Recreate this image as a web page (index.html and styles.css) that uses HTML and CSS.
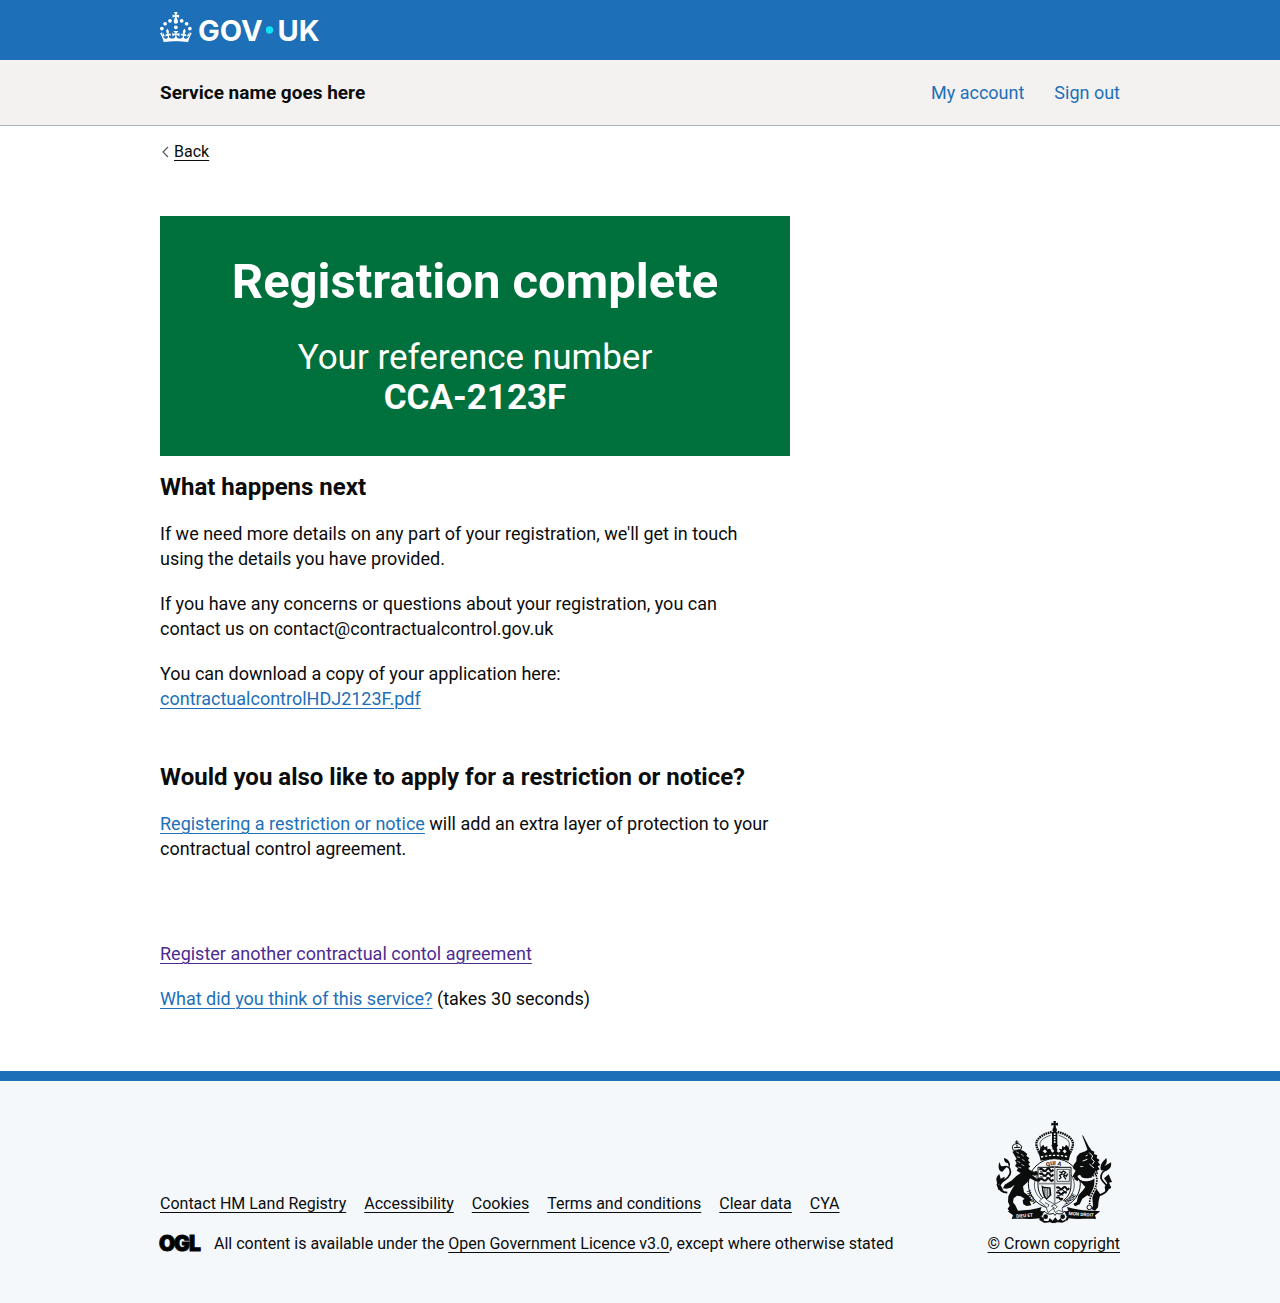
FILE: index.html
```html
<!DOCTYPE html>
<html lang="en">
<head>
<meta charset="utf-8">
<meta name="viewport" content="width=device-width, initial-scale=1">
<title>Registration complete - GOV.UK</title>
<link rel="stylesheet" href="styles.css">
</head>
<body>
<header>
  <div class="header">
    <div class="container">
      <a class="header-logo" href="#" aria-label="GOV.UK">
        <svg width="162" height="30" viewBox="0 0 324 60" fill="currentColor" aria-hidden="true">
          <circle cx="20" cy="17.6" r="3.7"/>
          <circle cx="10.2" cy="23.5" r="3.7"/>
          <circle cx="3.7" cy="33.2" r="3.7"/>
          <circle cx="31.7" cy="30.6" r="3.7"/>
          <circle cx="43.3" cy="17.6" r="3.7"/>
          <circle cx="53.2" cy="23.5" r="3.7"/>
          <circle cx="59.7" cy="33.2" r="3.7"/>
          <path d="M33.1,9.8c.2-.1.3-.3.5-.5l4.6,2.4v-6.8l-4.6,1.5c-.1-.2-.3-.3-.5-.5l1.9-5.9h-6.7l1.9,5.9c-.2.1-.3.3-.5.5l-4.6-1.5v6.8l4.6-2.4c.1.2.3.3.5.5l-2.6,8c-.9,2.8,1.2,5.7,4.1,5.7h0c3,0,5.1-2.9,4.1-5.7l-2.6-8ZM37,37.9s-3.4,3.8-4.1,6.1c2.2,0,4.2-.5,6.4-2.8l-.7,8.5c-2-2.8-4.4-4.1-5.7-3.8.1,3.1.5,6.7,5.8,7.2,3.7.3,6.7-1.5,7-3.8.4-2.6-2-4.3-3.7-1.6-1.4-4.5,2.4-6.1,4.9-3.2-1.9-4.5-1.8-7.7,2.4-10.9,3,4,2.6,7.3-1.2,11.1,2.4-1.3,6.2,0,4,4.6-1.2-2.8-3.7-2.2-4.2.2-.3,1.7.7,3.7,3,4.2,1.9.3,4.7-.9,7-5.9-1.3,0-2.4.7-3.9,1.7l2.4-8c.6,2.3,1.4,3.7,2.2,4.5.6-1.6.5-2.8,0-5.3l5,1.8c-2.6,3.6-5.2,8.7-7.3,17.5-7.4-1.1-15.7-1.7-24.5-1.7h0c-8.8,0-17.1.6-24.5,1.7-2.1-8.9-4.7-13.9-7.3-17.5l5-1.8c-.5,2.5-.6,3.7,0,5.3.8-.8,1.6-2.3,2.2-4.5l2.4,8c-1.5-1-2.6-1.7-3.9-1.7,2.3,5,5.2,6.2,7,5.9,2.3-.4,3.3-2.4,3-4.2-.5-2.4-3-3.1-4.2-.2-2.2-4.6,1.6-6,4-4.6-3.7-3.7-4.2-7.1-1.2-11.1,4.2,3.2,4.3,6.4,2.4,10.9,2.5-2.8,6.3-1.3,4.9,3.2-1.8-2.7-4.1-1-3.7,1.6.3,2.3,3.3,4.1,7,3.8,5.4-.5,5.7-4.2,5.8-7.2-1.3-.2-3.7,1-5.7,3.8l-.7-8.5c2.2,2.3,4.2,2.7,6.4,2.8-.7-2.3-4.1-6.1-4.1-6.1h10.6Z"/>
          <text class="wordmark" x="76" y="58">GOV</text>
          <circle class="logo-dot" cx="219" cy="36" r="7.3"/>
          <text class="wordmark" x="235" y="58">UK</text>
        </svg>
      </a>
    </div>
  </div>
  <div class="service">
    <div class="container service-row">
      <a class="service-name" href="#">Service name goes here</a>
      <nav class="service-nav" aria-label="Account">
        <a href="#">My account</a>
        <a href="#">Sign out</a>
      </nav>
    </div>
  </div>
</header>

<div class="container">
  <a class="back" href="#">
    <svg width="8" height="12" viewBox="0 0 8 12" aria-hidden="true"><path d="M7 1 2 6l5 5" fill="none" stroke="#505a5f" stroke-width="1.2"/></svg>
    <span>Back</span>
  </a>
  <main class="main">
    <div class="panel">
      <h1>Registration complete</h1>
      <div class="panel-body">Your reference number<br><strong>CCA-2123F</strong></div>
    </div>
    <h2>What happens next</h2>
    <p>If we need more details on any part of your registration, we'll get in touch<br>using the details you have provided.</p>
    <p>If you have any concerns or questions about your registration, you can<br>contact us on contact@contractualcontrol.gov.uk</p>
    <p class="section-end">You can download a copy of your application here:<br><a class="link" href="#">contractualcontrolHDJ2123F.pdf</a></p>
    <h2>Would you also like to apply for a restriction or notice?</h2>
    <p class="actions-gap"><a class="link" href="#">Registering a restriction or notice</a> will add an extra layer of protection to your<br>contractual control agreement.</p>
    <p><a class="link link-visited" href="#">Register another contractual contol agreement</a></p>
    <p><a class="link" href="#">What did you think of this service?</a> (takes 30 seconds)</p>
  </main>
</div>

<footer class="footer">
  <div class="container footer-row">
    <div>
      <ul class="footer-links">
        <li><a href="#">Contact HM Land Registry</a></li>
        <li><a href="#">Accessibility</a></li>
        <li><a href="#">Cookies</a></li>
        <li><a href="#">Terms and conditions</a></li>
        <li><a href="#">Clear data</a></li>
        <li><a href="#">CYA</a></li>
      </ul>
      <div class="licence">
        <svg class="ogl" width="41" height="18" viewBox="0 0 41 18" role="img" aria-label="OGL">
          <text x="-1" y="17">O</text><text x="14" y="17">G</text><text x="29" y="17">L</text>
        </svg>
        <span>All content is available under the <a href="#">Open Government Licence v3.0</a>, except where otherwise stated</span>
      </div>
    </div>
    <a class="copyright" href="#">
      <svg class="arms" width="116" height="102" viewBox="36 33 348 306" aria-hidden="true">
        <defs>
          <path id="garter-top" d="M158 219a54 54 0 0 1 108 0"/>
          <path id="garter-left" d="M158 276A72 76 0 0 1 146 190"/>
          <path id="garter-right" d="M236 288A74 76 0 0 0 286 205"/>
        </defs>
        <!-- crown -->
        <path d="M208 33h8l-1 7 7-2v9l-7-2 1 9h-8l1-9-7 2v-9l7 2z"/>
        <circle cx="212" cy="60" r="7"/>
        <path d="M204 66h16v42h-16z"/>
        <path d="M212 70v32" stroke="#f4f8fb" stroke-width="5" stroke-dasharray="5 3"/>
        <path d="M203 66c-20 4-44 16-46 34 0 12 6 22 10 32M221 66c20 4 44 16 46 34 0 12-6 22-10 32" fill="none" stroke="#0b0c0c" stroke-width="7" stroke-dasharray="5 2"/>
        <path d="M200 76c-16 5-32 14-32 25 0 10 4 17 8 25M224 76c16 5 32 14 32 25 0 10-4 17-8 25" fill="none" stroke="#0b0c0c" stroke-width="2"/>
        <path d="M164 128c4-12 6-18 14-24l4 8 8-4v10l8-2 4 6 4-8-4-8 10-8 10 8-4 8 4 8 4-6 8 2v-10l8 4 4-8c8 6 10 12 14 24l-6 24q-42-10-84 0z"/>
        <path d="M171 141q41-10 82 0" fill="none" stroke="#f4f8fb" stroke-width="4" stroke-dasharray="7 5"/>
        <path d="M176 124l7-6 6 7-6 5zM200 122l6-5 5 6-5 5zM218 123l6-6 6 6-6 5zM236 124l6-6 6 7-6 5z" fill="#f4f8fb"/>
        <!-- garter and shield -->
        <ellipse cx="211" cy="221" rx="78" ry="75" fill="#f4f8fb" stroke="#0b0c0c" stroke-width="3"/>
        <ellipse cx="211" cy="225" rx="60" ry="56" fill="#f4f8fb" stroke="#0b0c0c" stroke-width="2"/>
        <path d="M162 172h99v54c0 30-20 48-49 62-30-14-50-32-50-62z" fill="#f4f8fb" stroke="#0b0c0c" stroke-width="3"/>
        <path d="M212 172v114M162 221h99" stroke="#8c8f91" stroke-width="5"/>
        <g fill="none" stroke="#0b0c0c" stroke-width="6">
          <path d="M166 179q6-5 11 1t11-1 10 1 10-1M166 193q6-5 11 1t11-1 10 1 10-1M166 208q6-5 11 1t11-1 10 1 10-1"/>
          <path d="M217 234q6-5 10 1t10-1 10 1 8-1M217 249q6-5 10 1t10-1 10 1M217 264q6-5 10 1t9-1"/>
          <path d="M169 185q7 3 10-1t10 3 12-2M169 200q7 3 10-1t10 3 12-2M220 241q7 3 10-1t10 3 8-2M220 256q7 3 10-1t8 2" stroke-width="3"/>
          <path d="M219 178h37v36h-37z" stroke-width="2"/>
          <path d="M226 185l7 3 5-5 7 4-6 7 8 5 4-8M236 191l-9 5 4 7-6 5M238 197l8 11" stroke-width="4"/>
          <path d="M175 230c4 4 13 2 23 4l2 20-13 14c-8-10-11-24-12-38z" stroke-width="4"/>
          <path d="M181 234v25M186 234v30M191 234v28M196 236v20" stroke-width="2"/>
        </g>
        <text class="motto"><textPath href="#garter-top" startOffset="60">QUI A</textPath></text>
        <text class="motto"><textPath href="#garter-left">HONI</textPath></text>
        <text class="motto"><textPath href="#garter-right">PENSE</textPath></text>
        <path d="M166 273l14-12 10 10 22 12 24-14 12 9-14 16 3 11-14-4-9 7-6-13-16 13-6-18z" fill="#f4f8fb" stroke="#0b0c0c" stroke-width="2"/>
        <path d="M183 278l12 6-4 8M202 288l9-4 9 6-6 6z" fill="none" stroke="#0b0c0c" stroke-width="2"/>
        <!-- lion -->
        <path d="M88 121q-7-14 3-18l8-3 9 3q9 6 2 17z" fill="#f4f8fb" stroke="#0b0c0c" stroke-width="3"/>
        <path d="M98 91v12M93 96h11M90 113l19-1M99 104v8" stroke="#0b0c0c" stroke-width="3"/>
        <path d="M85 125l20-7 14 5 11 9-3 5 9 8-4 5 6 8-5 4 6 8-6 4 4 6 13 5 7-3 5 7-2 7-9 1-8-3 16 12 7-4 5 7-5 6-11-1-17-9-8 12-13 12 3 18 14 10 10 15-7 2 5 12-14 2-10-5-2-12 6-5-12-7-11-2-10 8-2 12 7 9 8 16-12 5-13-2-6-9 6-9-5-12 1-16 9-18 10-17-12 9-13 3-10-1 5-11 22-13 13-13 13-9-12-7 4-7-9-7 5-8-5-9 5-4z"/>
        <path d="M97 126l8 4M111 132l8 6M99 140l9 3M114 148l8 5M100 154l9 4M112 163l9 5M102 171l10 3" stroke="#f4f8fb" stroke-width="2"/>
        <path d="M70 248q-22-2-24-16 0-12 16-22c14-9 21-20 15-34-4-9-16-8-26-1" fill="none" stroke="#0b0c0c" stroke-width="5"/>
        <path d="M72 160c-8-1-12-6-12-16 8 2 17 8 18 20l-2 12zM46 156l5 12 16 4-12 13c-10 0-14-12-9-29zM38 214c-3-8 0-15 8-22l4 14 12-6c0 12-8 19-22 25zM37 221l14 6 8 16-16-4z"/>
        <!-- unicorn -->
        <path d="M294 75l4 3 20 38-7 4z"/>
        <path d="M304 124l8-6 5-6 5 9 9 4-1 7 10 4-2 8 9 6-5 6 7 9-8 4 6 9-8 4 3 9-11 4c-8-6-16-8-28-8l-13 7-9 20-10-6 2-22 14-12 14-6-12 1-8 8-12-3-1-8 9-12 1-14 9-10z"/>
        <path d="M275 182l-9-9 12-7 16 7 29 5c12 8 17 22 17 34l-3 24 12 17-5 20-2 19-9 10-11-5 5-10-2-22-15-9-15 10-8 17-14 6-5-8 10-5 5-20 12-13 9-12-11-12-14-13-14-6z"/>
        <path d="M316 128l10 10-4 8 9 8-6 9M305 138l6-3M296 153l14-5M316 162l14 12" fill="none" stroke="#f4f8fb" stroke-width="3"/>
        <path d="M284 196c8 20 40 16 50-2q7 34-10 58-8 20-6 32" fill="none" stroke="#f4f8fb" stroke-width="9"/>
        <path d="M302 201q22 4 33-10 10 26-9 57-10 18-9 34" fill="none" stroke="#0b0c0c" stroke-width="5" stroke-dasharray="5 3"/>
        <circle cx="316" cy="292" r="7" fill="#f4f8fb" stroke="#0b0c0c" stroke-width="3"/>
        <path d="M340 258q26-8 31-20c3-13-16-20-20-33q-2-20 20-28" fill="none" stroke="#0b0c0c" stroke-width="5"/>
        <path d="M351 181c-5-16 4-25 16-37 3 12 1 18-7 25l21-12c2 13-2 21-15 25zM360 205l14-12 10 23-9 2 7 15-18 11-2-14 8-10z"/>
        <!-- scroll and compartment -->
        <path d="M71 304c24-4 52 2 102-13l-4 11 11 3-13 20c-32 4-60-1-84 2l4-11zM349 304c-22-4-50 2-100-13l4 11-12 3 13 20c32 4 58-1 82 2l-3-11z"/>
        <text class="scroll" transform="rotate(-4 126 313)" x="96" y="321">DIEU ET</text>
        <text class="scroll" transform="rotate(4 294 313)" x="254" y="318">MON DROIT</text>
        <path d="M180 303c12 12 18 10 28 7l5 6 5-6c10 3 18 3 24-7l10 22-14 9-12-3-12 7-14-3-18 1-14-9z" fill="#f4f8fb" stroke="#0b0c0c" stroke-width="3"/>
        <path d="M168 320l12 3-1 9 14 2 4-10 9 8 8-10 8 10 8-8 4 9 13-2-1-8 9-4-3 11-17 8-20-2-8 4-9-4-18 2-14-8z"/>
        <circle cx="185" cy="320" r="7"/><circle cx="236" cy="320" r="7"/>
      </svg>
      <span>© Crown copyright</span>
    </a>
  </div>
</footer>
</body>
</html>
```
FILE: styles.css
```css
* { box-sizing: border-box; }
body {
  margin: 0;
  background: #fff;
  color: #0b0c0c;
  font-family: Roboto, "Liberation Sans", sans-serif;
  font-size: 18px;
  line-height: 25px;
}
h1, h2, p, ul { margin: 0; padding: 0; }
a { color: inherit; text-decoration-thickness: 1px; text-underline-offset: 3px; }
.container { max-width: 1020px; margin: 0 auto; padding: 0 30px; }

.header { background: #1d70b8; padding: 12px 0 18px; }
.header-logo { display: block; width: 162px; height: 30px; color: #fff; }
.header-logo svg { display: block; overflow: visible; }
.wordmark { font-family: Inter, sans-serif; font-size: 58px; font-weight: 700; }
.logo-dot { fill: #0fe3f5; }

.service { background: #f3f2f1; border-bottom: 1px solid #b1b4b6; padding: 20px 0; }
.service-row { display: flex; justify-content: space-between; }
.service a { text-decoration: none; }
.service-name { font-size: 19px; font-weight: 700; }
.service-nav { display: flex; gap: 30px; color: #1d70b8; }

.back {
  display: flex;
  width: max-content;
  align-items: center;
  gap: 5px;
  padding-top: 16px;
  font-size: 16px;
  line-height: 20px;
  text-decoration: none;
}
.back span { text-decoration: underline 1px; text-underline-offset: 3px; }
.back svg { margin-left: 1px; }

.main { max-width: 630px; padding: 54px 0 40px; }
.panel { background: #00703c; color: #fff; padding: 41px 40px 39px; margin-bottom: 16px; text-align: center; }
h1 { font-size: 49px; line-height: 50px; margin-bottom: 31px; }
.panel-body { font-size: 35px; line-height: 40px; margin-bottom: -1px; }
h2 { font-size: 24px; line-height: 30px; margin-bottom: 19px; }
.main p { margin-bottom: 20px; }
.main .section-end { margin-bottom: 51px; }
.main .actions-gap { margin-bottom: 80px; }
.link { color: #1d70b8; }
.link-visited { color: #4c2c92; }

.footer {
  background: #f4f8fb;
  border-top: 10px solid #1d70b8;
  padding: 40px 0 49px;
  font-size: 16px;
  line-height: 20px;
}
.footer-row { display: flex; justify-content: space-between; align-items: flex-end; }
.footer-links { display: flex; flex-wrap: wrap; column-gap: 18px; margin-bottom: 20px; list-style: none; }
.licence { display: flex; gap: 13px; }
.ogl { font: 900 21px Inter, sans-serif; overflow: visible; stroke: #0b0c0c; stroke-width: 1; }
.copyright { display: flex; flex-direction: column; align-items: center; gap: 11px; text-decoration: none; }
.copyright span { text-decoration: underline 1px; text-underline-offset: 3px; }
.arms { fill: #0b0c0c; overflow: visible; }
.motto { font-size: 17px; font-weight: 700; }
.scroll { font-size: 14px; font-weight: 700; fill: #f4f8fb; }
```
